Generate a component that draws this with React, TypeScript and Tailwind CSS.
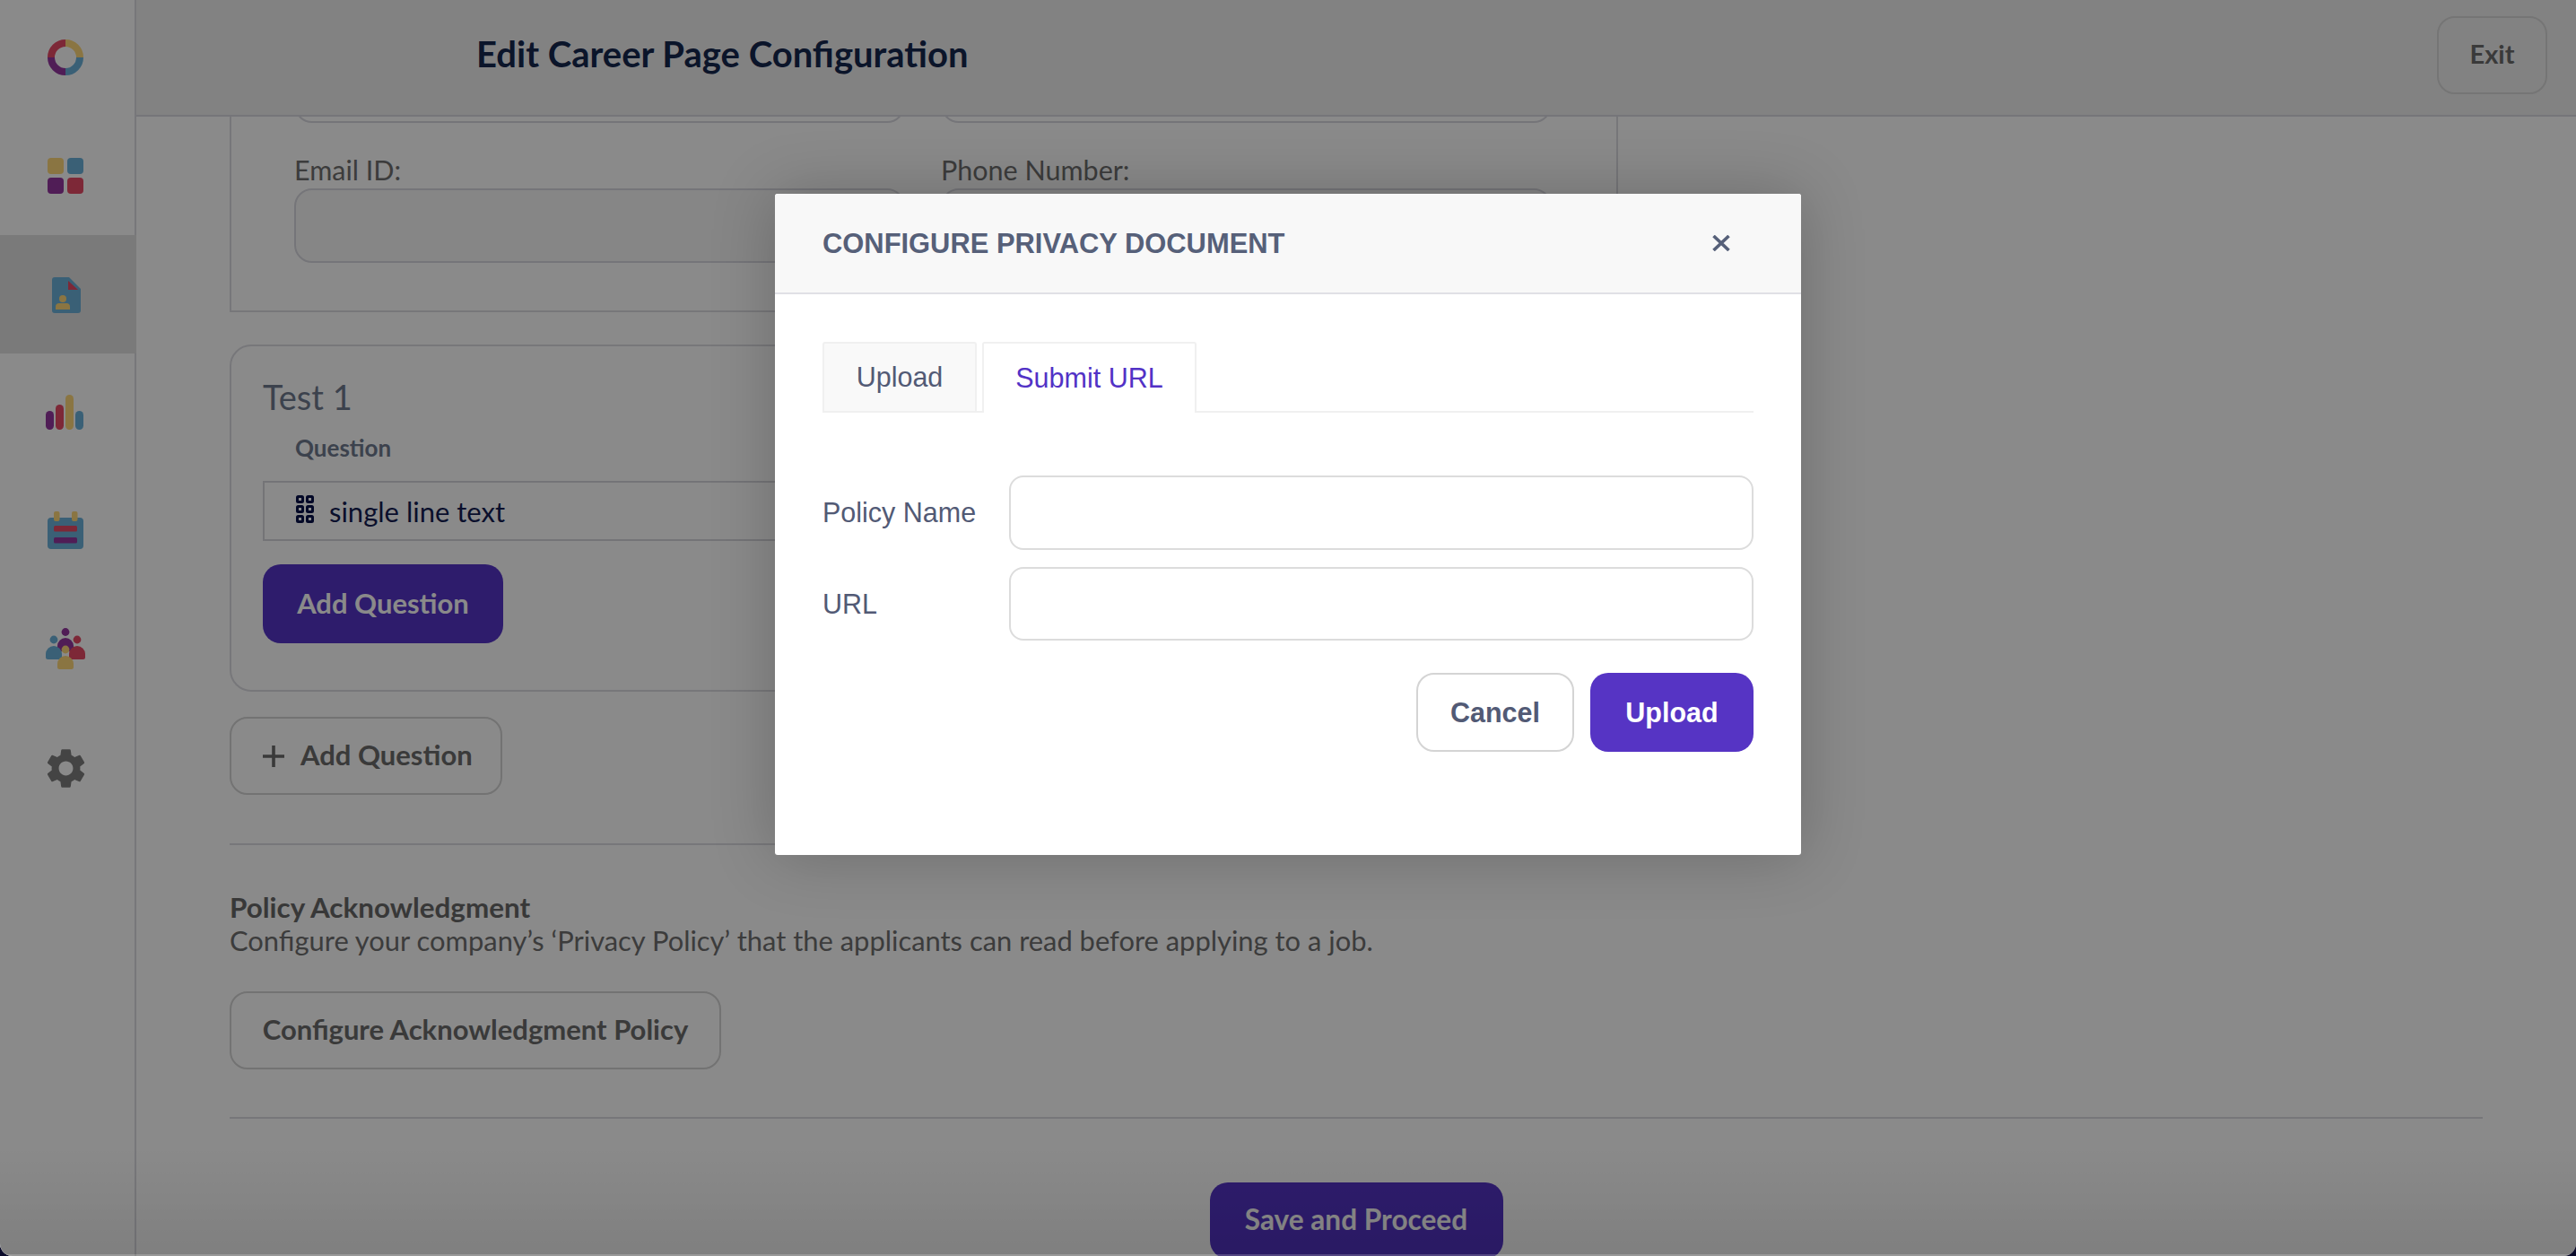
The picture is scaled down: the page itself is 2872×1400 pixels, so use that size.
import React from "react";
import { MdSettings } from "react-icons/md";

const GOLD = "#ffd97a";
const BLUE = "#6bb2da";
const PURPLE = "#94379f";
const RED = "#e74a66";

function Body({ x, y, color }: { x: number; y: number; color: string }) {
  return (
    <path
      d={`M${x} ${y + 15} a2.5 2.5 0 0 1 -2.5 -2.5 v-3.5 a9 9 0 0 1 18 0 v3.5 a2.5 2.5 0 0 1 -2.5 2.5 z`}
      transform={`translate(2.5 0)`}
      fill={color}
    />
  );
}

function NavIcon({ cy, children }: { cy: number; children: React.ReactNode }) {
  return (
    <svg width="60" height="60" viewBox={`45 ${cy - 30} 60 60`}>
      {children}
    </svg>
  );
}

const rows: { cy: number; active?: boolean; icon: React.ReactNode }[] = [
  {
    cy: 64,
    icon: (
      <g fill="none" strokeWidth="8">
        <path d="M73 48 A16 16 0 0 1 89 64" stroke={GOLD} />
        <path d="M89 64 A16 16 0 0 1 73 80" stroke={BLUE} />
        <path d="M73 80 A16 16 0 0 1 57 64" stroke={PURPLE} />
        <path d="M57 64 A16 16 0 0 1 73 48" stroke={RED} />
      </g>
    ),
  },
  {
    cy: 196,
    icon: (
      <g>
        <rect x="53" y="176" width="18" height="18" rx="4" fill={GOLD} />
        <rect x="75" y="176" width="18" height="18" rx="4" fill={BLUE} />
        <rect x="53" y="198" width="18" height="18" rx="4" fill={PURPLE} />
        <rect x="75" y="198" width="18" height="18" rx="4" fill={RED} />
      </g>
    ),
  },
  {
    cy: 328,
    active: true,
    icon: (
      <g>
        <path d="M60 309 H76 L89 322 V346 a3 3 0 0 1 -3 3 H60 a3 3 0 0 1 -3 -3 V312 a3 3 0 0 1 3 -3 z" fill={BLUE} />
        <path d="M75 313 L86 323 H75 z" fill={RED} />
        <circle cx="69" cy="333" r="4" fill={GOLD} />
        <path d="M61 345 v-3 a4 4 0 0 1 4 -4 h8 a4 4 0 0 1 4 4 v3 z" fill={GOLD} />
      </g>
    ),
  },
  {
    cy: 460,
    icon: (
      <g>
        <rect x="51" y="458" width="9" height="21" rx="4.5" fill={PURPLE} />
        <rect x="62" y="451" width="9" height="28" rx="4.5" fill={RED} />
        <rect x="73" y="440" width="9" height="39" rx="4.5" fill={GOLD} />
        <rect x="84" y="458" width="9" height="21" rx="4.5" fill={BLUE} />
      </g>
    ),
  },
  {
    cy: 592,
    icon: (
      <g>
        <rect x="53" y="577" width="40" height="35" rx="4" fill={BLUE} />
        <rect x="60" y="570" width="6.5" height="11" rx="2" fill={GOLD} />
        <rect x="80" y="570" width="6.5" height="11" rx="2" fill={GOLD} />
        <rect x="60" y="586" width="26" height="6.5" rx="1.5" fill={RED} />
        <rect x="60" y="599" width="26" height="6.5" rx="1.5" fill={PURPLE} />
      </g>
    ),
  },
  {
    cy: 724,
    icon: (
      <g>
        <circle cx="73" cy="704.5" r="4.4" fill={PURPLE} />
        <circle cx="60" cy="713" r="4.4" fill={BLUE} />
        <circle cx="86" cy="713" r="4.4" fill={RED} />
        <Body x={64} y={711} color={PURPLE} />
        <Body x={51} y={720} color={BLUE} />
        <Body x={77} y={720} color={RED} />
        <circle cx="73" cy="724" r="4.4" fill={GOLD} />
        <Body x={64} y={731} color={GOLD} />
      </g>
    ),
  },
];

function Sidebar() {
  return (
    <aside className="w-[152px] shrink-0 -mt-[2px] flex flex-col border-r-2 border-[#dcdce2] bg-white">
      {rows.map((r) => (
        <div
          key={r.cy}
          className={`h-[132px] flex items-center justify-center ${r.active ? "bg-[#e2e2e2] -mr-[2px]" : ""}`}
        >
          <NavIcon cy={r.cy}>{r.icon}</NavIcon>
        </div>
      ))}
      <div className="h-[132px] flex items-center justify-center pr-[4px]">
        <MdSettings size={53} color="#7e7e7e" />
      </div>
    </aside>
  );
}

function Field({ label }: { label: string }) {
  return (
    <div className="flex flex-col">
      <label className="h-[38px] text-[30.5px] leading-[34px] text-[#6f6f6f]">{label}</label>
      <div className="h-[83px] rounded-[20px] border-2 border-[#d9d9df] bg-[#f8f8f8]" />
    </div>
  );
}

function Main() {
  return (
    <main className="flex-1 min-w-0 flex flex-col font-['Lato','Liberation_Sans',sans-serif]">
      <header className="h-[130px] shrink-0 relative z-10 border-b-2 border-[#d8d8e0] bg-[#f1f1f1] flex items-center justify-between pl-[379px] pr-[32px] pb-[8px]">
        <h1 className="text-[40px] leading-[46px] font-bold text-[#16274f]">Edit Career Page Configuration</h1>
        <button className="w-[123px] h-[87px] mt-[3px] pb-[3px] rounded-[20px] border-2 border-[#d8d8d8] text-[29px] font-bold text-[#6b6b6b]">
          Exit
        </button>
      </header>
      <div className="flex-1 min-h-0 px-[104px]">
        <section className="w-[1548px] -mt-[100px] border-2 border-[#dcdce2] pt-[22px] pb-[53px] pl-[70px] pr-[72px]">
          <div className="grid grid-cols-2 gap-x-[40px]">
            <div className="h-[83px] rounded-[20px] border-2 border-[#d9d9df]" />
            <div className="h-[83px] rounded-[20px] border-2 border-[#d9d9df]" />
          </div>
          <div className="grid grid-cols-2 gap-x-[40px] mt-[35px]">
            <Field label="Email ID:" />
            <Field label="Phone Number:" />
          </div>
        </section>

        <section className="w-[1548px] h-[387px] mt-[36px] rounded-[24px] border-2 border-[#dcdce2] px-[35px] pt-[34px]">
          <div className="text-[38px] leading-[44px] text-[#6f7a8f]">Test 1</div>
          <div className="pl-[36px] mt-[19px] h-[53px] text-[26px] leading-[32px] font-bold text-[#6f7a8f]">Question</div>
          <div className="h-[67px] border-2 border-[#d6d6dc] flex items-center pl-[35px]">
            <svg width="20" height="31" viewBox="0 0 20 31" className="mr-[17px] -mt-[5px]">
              <g fill="none" stroke="#09124a" strokeWidth="3">
                {[1.5, 12.5, 23.5].map((y) =>
                  [1.5, 12.5].map((x) => <rect key={`${x}-${y}`} x={x} y={y} width="6" height="6" rx="1" />)
                )}
              </g>
            </svg>
            <span className="text-[31px] leading-[36px] text-[#141d52]">single line text</span>
          </div>
          <button className="w-[268px] h-[88px] mt-[26px] pb-[2px] rounded-[20px] bg-[#5534c8] text-[31px] font-bold text-white">
            Add Question
          </button>
        </section>

        <button className="w-[304px] h-[87px] mt-[28px] pb-[2px] rounded-[20px] border-2 border-[#d4d4d4] flex items-center pl-[35px] gap-[18px] text-[31px] font-bold text-[#6b6b6b]">
          <svg width="24" height="24" viewBox="0 0 24 24" className="mt-[2px]">
            <path d="M12 0v24M0 12h24" stroke="#6b6b6b" strokeWidth="3.6" fill="none" />
          </svg>
          Add Question
        </button>

        <div className="w-[1548px] h-[2px] mt-[54px] bg-[#dcdce2]" />

        <h2 className="mt-[50px] text-[31.4px] leading-[38px] font-bold text-[#686868]">Policy Acknowledgment</h2>
        <p className="text-[30.9px] leading-[38px] text-[#6f6f6f]">
          Configure your company’s ‘Privacy Policy’ that the applicants can read before applying to a job.
        </p>
        <button className="w-[548px] h-[87px] mt-[37px] pb-[3px] rounded-[20px] border-2 border-[#d4d4d4] text-[31px] font-bold text-[#6b6b6b]">
          Configure Acknowledgment Policy
        </button>

        <div className="h-[2px] mt-[53px] bg-[#dcdce2]" />

        <div className="flex justify-center mt-[71px]">
          <button className="w-[327px] h-[85px] pb-[2px] rounded-[20px] bg-[#5534c8] text-[31.6px] font-bold text-white">
            Save and Proceed
          </button>
        </div>
      </div>
    </main>
  );
}

function Modal() {
  return (
    <div className="w-[1144px] h-[737px] rounded-[3px] overflow-hidden bg-white shadow-[0_0_70px_rgba(0,0,0,0.22)] font-['Liberation_Sans',Arial,sans-serif] text-[30.5px] text-[#525a75]">
      <div className="h-[112px] bg-[#f8f8f8] border-b-2 border-[#e0e0e6] flex items-center justify-between pl-[53px] pr-[79px]">
        <h3 className="text-[30.9px] pt-[2px] font-bold text-[#566079]">CONFIGURE PRIVACY DOCUMENT</h3>
        <svg width="20" height="18" viewBox="0 0 20 18">
          <path d="M1.5 1 18.5 17M18.5 1 1.5 17" stroke="#566079" strokeWidth="3.6" fill="none" />
        </svg>
      </div>
      <div className="px-[53px] pt-[53px]">
        <div className="flex h-[79px] gap-[6px] border-b-2 border-[#f0f0f0]">
          <div className="w-[172px] h-[77px] flex items-center justify-center bg-[#f9f9f9] border-2 border-b-0 border-[#f0f0f0] rounded-t-[3px]">
            Upload
          </div>
          <div className="w-[239px] h-[79px] flex items-center justify-center bg-white border-2 border-b-0 border-[#f0f0f0] rounded-t-[3px] text-[#5232c6]">
            Submit URL
          </div>
        </div>
        <div className="mt-[70px] flex items-center">
          <label className="w-[208px]">Policy Name</label>
          <input className="flex-1 h-[83px] rounded-[16px] border-2 border-[#dcdcdc] bg-white outline-none" />
        </div>
        <div className="mt-[19px] flex items-center">
          <label className="w-[208px] pt-[1px]">URL</label>
          <input className="flex-1 h-[82px] rounded-[16px] border-2 border-[#dcdcdc] bg-white outline-none" />
        </div>
        <div className="mt-[36px] flex justify-end gap-[18px]">
          <button className="w-[176px] h-[88px] pt-[1px] rounded-[20px] border-2 border-[#d4d4d4] bg-white font-bold">Cancel</button>
          <button className="w-[182px] h-[88px] pt-[1px] rounded-[20px] bg-[#5634c4] font-bold text-white">Upload</button>
        </div>
      </div>
    </div>
  );
}

export default function App() {
  return (
    <div className="h-[1400px] bg-[#0a0a2a] overflow-hidden">
      <div className="relative h-[1400px] rounded-b-[14px] overflow-hidden bg-white flex">
        <Sidebar />
        <Main />
        <div className="absolute inset-x-0 bottom-0 h-[120px] z-20 bg-gradient-to-b from-transparent to-black/[0.08]" />
        <div className="absolute inset-0 z-30 bg-[rgba(0,0,0,0.46)] flex justify-center items-start pt-[216px]">
          <Modal />
        </div>
        <div className="absolute inset-x-0 bottom-0 h-[2px] z-40 bg-white/20" />
      </div>
    </div>
  );
}
